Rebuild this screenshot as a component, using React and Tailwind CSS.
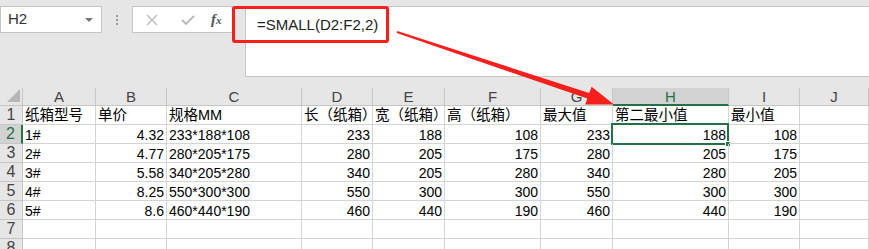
import React from 'react';

const cols = ['A', 'B', 'C', 'D', 'E', 'F', 'G', 'H', 'I', 'J'];

const head = ['纸箱型号', '单价', '规格MM', '长（纸箱）', '宽（纸箱）', '高（纸箱）', '最大值', '第二最小值', '最小值', ''];

const rows = [
    ['1#', '4.32', '233*188*108', '233', '188', '108', '233', '188', '108'],
    ['2#', '4.77', '280*205*175', '280', '205', '175', '280', '205', '175'],
    ['3#', '5.58', '340*205*280', '340', '205', '280', '340', '280', '205'],
    ['4#', '8.25', '550*300*300', '550', '300', '300', '550', '300', '300'],
    ['5#', '8.6', '460*440*190', '460', '440', '190', '460', '440', '190'],
];

// columns whose values are text (left aligned)
const textCols = [0, 2];

const font = { fontFamily: "'Liberation Sans', 'Noto Sans CJK SC', sans-serif" };

const App = () => {
    return (
        <div className="relative w-[869px] h-[249px] overflow-hidden bg-[#e6e6e6] text-black" style={font}>
            {/* formula bar */}
            <div className="flex items-start h-[88px] pt-[6px]">
                <div className="flex items-center justify-between w-[102px] h-[27px] bg-white border border-[#c6c6c6] pl-[7px] pr-[8px]">
                    <span className="text-[15px] text-[#333]">H2</span>
                    <span className="w-0 h-0 border-l-[4px] border-r-[4px] border-t-[4px] border-l-transparent border-r-transparent border-t-[#777]" />
                </div>
                <div className="flex flex-col items-center justify-center gap-[2px] w-[30px] h-[27px]">
                    <span className="w-[2px] h-[2px] bg-[#9a9a9a]" />
                    <span className="w-[2px] h-[2px] bg-[#9a9a9a]" />
                    <span className="w-[2px] h-[2px] bg-[#9a9a9a]" />
                </div>
                <div className="flex items-center w-[101px] h-[27px] bg-white border border-[#c6c6c6]">
                    <svg width="12" height="12" viewBox="0 0 12 12" className="ml-[13px]">
                        <path d="M1 1 L11 11 M11 1 L1 11" stroke="#b8b8b8" strokeWidth="1.4" fill="none" />
                    </svg>
                    <svg width="14" height="12" viewBox="0 0 14 12" className="ml-[23px]">
                        <path d="M1 6 L5 10 L13 2" stroke="#b8b8b8" strokeWidth="1.8" fill="none" />
                    </svg>
                    <span className="ml-[16px] text-[15px] italic font-bold text-[#555]" style={{ fontFamily: "'Liberation Serif', serif" }}>
                        f<span className="text-[11px]">x</span>
                    </span>
                </div>
                <div className="flex-1 ml-[12px] h-[71px] bg-white border-l border-t border-b border-[#c6c6c6] pl-[11px] pt-[6px]">
                    <span className="text-[15px] text-[#222]">=SMALL(D2:F2,2)</span>
                </div>
            </div>

            {/* sheet grid */}
            <div className="grid grid-cols-[23px_73px_71px_135px_71px_72px_96px_72px_116px_71px_69px] bg-white text-[14px]">
                <div className="relative h-[18px] bg-[#e6e6e6] border-r border-b border-[#c6c6c6]">
                    <svg width="13" height="13" viewBox="0 0 13 13" className="absolute right-[2px] bottom-[3px]">
                        <path d="M13 0 L13 13 L0 13 Z" fill="#b6b6b6" />
                    </svg>
                </div>
                {cols.map((c) => (
                    <div
                        key={c}
                        className={`flex items-center justify-center h-[18px] border-r text-[15px] leading-none ${
                            c === 'H'
                                ? 'bg-[#d2d2d2] border-b-2 border-b-[#217346] border-r-[#c6c6c6] text-[#217346]'
                                : 'bg-[#e6e6e6] border-b border-[#c6c6c6] text-[#444]'
                        }`}
                    >
                        {c}
                    </div>
                ))}

                {[head, ...rows.map((r) => [...r, ''])].map((r, ri) => (
                    <React.Fragment key={ri}>
                        <div
                            className={`flex items-center justify-center h-[19px] border-b text-[16px] leading-none ${
                                ri === 1
                                    ? 'bg-[#d2d2d2] border-r-2 border-r-[#217346] border-b-[#c6c6c6] text-[#217346]'
                                    : 'bg-[#e6e6e6] border-r border-[#c6c6c6] text-[#444]'
                            }`}
                        >
                            {ri + 1}
                        </div>
                        {r.map((v, ci) => (
                            <div
                                key={ci}
                                className={`relative flex items-center h-[19px] px-[2px] pt-px border-r border-b border-[#d4d4d4] whitespace-nowrap leading-none ${
                                    ri === 0 ? 'text-[14.5px]' : ''
                                } ${ri === 0 || textCols.includes(ci) ? 'justify-start' : 'justify-end'}`}
                            >
                                {v}
                                {ri === 1 && ci === 7 && (
                                    <div className="absolute -left-[2px] -top-[2px] w-[118px] h-[22px] border-2 border-[#217346]">
                                        <span className="absolute -right-[4px] -bottom-[4px] w-[6px] h-[6px] bg-[#217346] border border-white" />
                                    </div>
                                )}
                            </div>
                        ))}
                    </React.Fragment>
                ))}

                {[7, 8].map((n) => (
                    <React.Fragment key={n}>
                        <div className="flex items-center justify-center h-[19px] bg-[#e6e6e6] border-r border-b border-[#c6c6c6] text-[16px] text-[#444] leading-none">
                            {n}
                        </div>
                        {cols.map((c) => (
                            <div key={c} className="h-[19px] border-r border-b border-[#d4d4d4]" />
                        ))}
                    </React.Fragment>
                ))}
            </div>

            {/* annotation: red box + arrow */}
            <div className="absolute left-[232px] top-[6px] w-[157px] h-[37px] border-[3px] border-[#f5201b] rounded-[3px]" />
            <svg className="absolute left-0 top-0 pointer-events-none" width="869" height="249">
                <polygon
                    points="397.3,31.1 589.2,93 591.6,86.8 614,104.5 585.2,104.6 587.3,98.6 396.7,33"
                    fill="#f5201b"
                />
            </svg>
        </div>
    );
};

export default App;
